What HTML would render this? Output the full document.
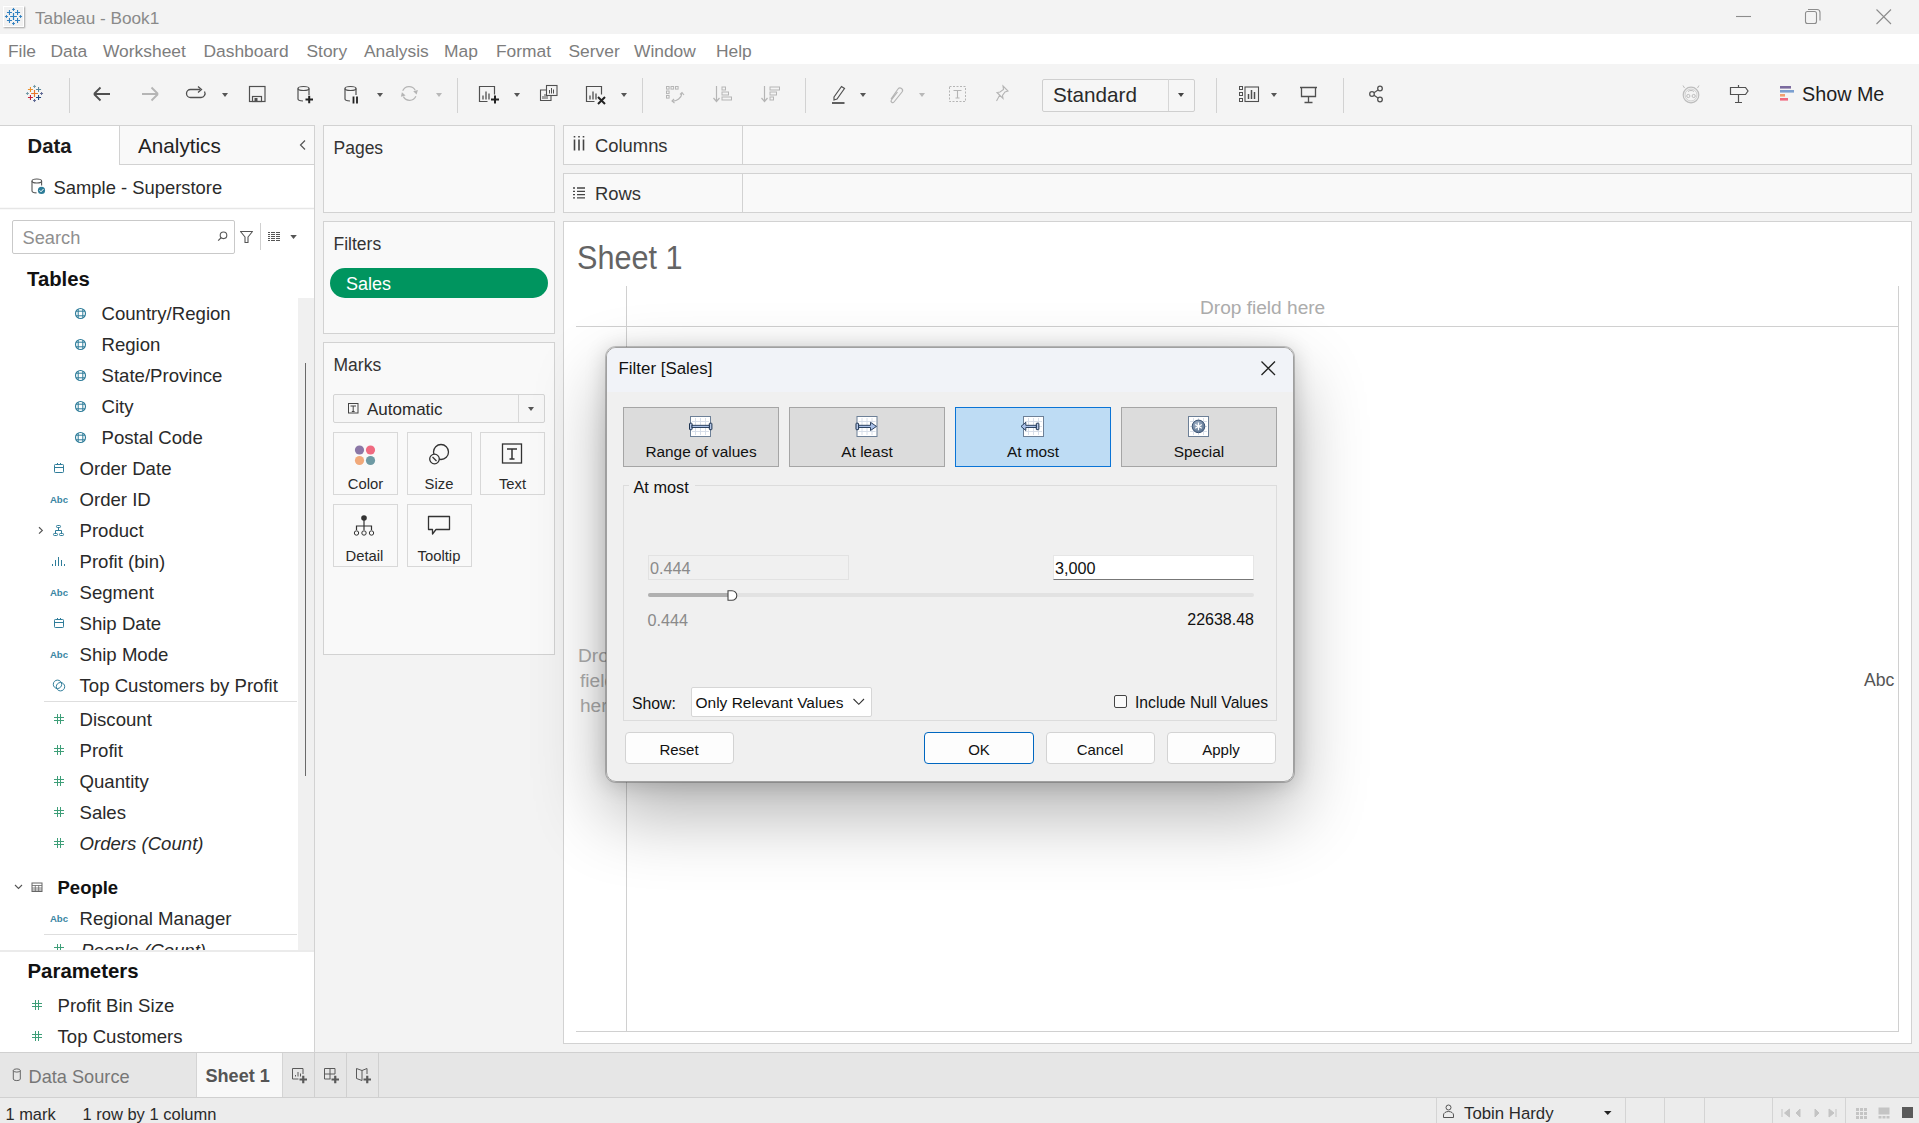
<!DOCTYPE html>
<html><head><meta charset="utf-8">
<style>
*{box-sizing:border-box;margin:0;padding:0}
html,body{width:1919px;height:1123px;overflow:hidden;background:#f3f3f3;font-family:"Liberation Sans",sans-serif;color:#333}
.a{position:absolute}
.t{position:absolute;white-space:nowrap;line-height:1}
svg{position:absolute;overflow:visible}
#title{left:0;top:0;width:1919px;height:34px;background:#f3f3f3}
#menu{left:0;top:34px;width:1919px;height:30px;background:#fff}
#menu .t{top:42px;font-size:17.4px;color:#7c7c7c}
#tool{left:0;top:64px;width:1919px;height:61px;background:#f4f4f4}
.sep{position:absolute;top:78px;width:1px;height:35px;background:#d2d2d2}
.dd{position:absolute;width:0;height:0;border-left:3.5px solid transparent;border-right:3.5px solid transparent;border-top:4px solid #555}
.dd.l{border-top-color:#b8b8b8}
#datapane{left:0;top:125px;width:315px;height:927px;background:#fff;border-right:1px solid #d2d2d2;border-top:1px solid #d2d2d2}
.shelf{position:absolute;background:#f9f9f9;border:1px solid #d2d2d2}
#canvas{left:563px;top:221px;width:1349px;height:823px;background:#fff;border:1px solid #d2d2d2}
#tabs{left:0;top:1052px;width:1919px;height:46px;background:#e6e6e6;border-top:1px solid #d0d0d0;border-bottom:1px solid #d0d0d0}
#status{left:0;top:1098px;width:1919px;height:25px;background:#ececec}
.fi{position:absolute;font-size:18.6px;color:#2a2a2a;white-space:nowrap;line-height:1}
.ic{position:absolute}
</style></head><body>
<div class="a" id="title"></div>
<div class="a" style="left:3px;top:6px;width:21px;height:21px;background:#f1f1f1;border:1px solid #fff;box-shadow:1px 1px 1.5px rgba(0,0,0,.32)"></div>
<svg style="left:0;top:0" width="60" height="120"><g transform="translate(13.5 16.5) scale(1.0)"><path d="M-3.4 0H3.4M0 -3.4V3.4" stroke="#2f7fc0" stroke-width="1.15"/><path d="M-6.55 -4.05H-1.5499999999999998M-4.05 -6.55V-1.5499999999999998" stroke="#2f7fc0" stroke-width="1.05"/><path d="M1.5499999999999998 -4.05H6.55M4.05 -6.55V-1.5499999999999998" stroke="#2f7fc0" stroke-width="1.05"/><path d="M-6.55 4.05H-1.5499999999999998M-4.05 1.5499999999999998V6.55" stroke="#2f7fc0" stroke-width="1.05"/><path d="M1.5499999999999998 4.05H6.55M4.05 1.5499999999999998V6.55" stroke="#2f7fc0" stroke-width="1.05"/><path d="M-1.5 -7.05H1.5M0 -8.55V-5.55" stroke="#2f7fc0" stroke-width="0.95"/><path d="M-1.5 7.05H1.5M0 5.55V8.55" stroke="#2f7fc0" stroke-width="0.95"/><path d="M-8.55 0H-5.55M-7.05 -1.5V1.5" stroke="#2f7fc0" stroke-width="0.95"/><path d="M5.55 0H8.55M7.05 -1.5V1.5" stroke="#2f7fc0" stroke-width="0.95"/></g></svg>
<div class="t" style="left:35px;top:9.8px;font-size:17.2px;color:#8a8a8a;font-weight:normal;">Tableau - Book1</div>
<svg style="left:0;top:0" width="1919" height="34"><g stroke="#8c8c8c" stroke-width="1.1" fill="none"><path d="M1736 16.5H1751"/><rect x="1805.5" y="11.5" width="11" height="12" rx="2"/><path d="M1808 9.5H1817a3 3 0 0 1 3 3V20.5"/><path d="M1876.5 9.5L1891 24M1891 9.5L1876.5 24"/></g></svg>
<div class="a" id="menu">
</div>
<div class="t" style="left:8px;top:42.7px;font-size:17.4px;color:#7d7d7d;font-weight:normal;">File</div>
<div class="t" style="left:50.5px;top:42.7px;font-size:17.4px;color:#7d7d7d;font-weight:normal;">Data</div>
<div class="t" style="left:103px;top:42.7px;font-size:17.4px;color:#7d7d7d;font-weight:normal;">Worksheet</div>
<div class="t" style="left:203.5px;top:42.7px;font-size:17.4px;color:#7d7d7d;font-weight:normal;">Dashboard</div>
<div class="t" style="left:306.5px;top:42.7px;font-size:17.4px;color:#7d7d7d;font-weight:normal;">Story</div>
<div class="t" style="left:364px;top:42.7px;font-size:17.4px;color:#7d7d7d;font-weight:normal;">Analysis</div>
<div class="t" style="left:444px;top:42.7px;font-size:17.4px;color:#7d7d7d;font-weight:normal;">Map</div>
<div class="t" style="left:496px;top:42.7px;font-size:17.4px;color:#7d7d7d;font-weight:normal;">Format</div>
<div class="t" style="left:568.5px;top:42.7px;font-size:17.4px;color:#7d7d7d;font-weight:normal;">Server</div>
<div class="t" style="left:634px;top:42.7px;font-size:17.4px;color:#7d7d7d;font-weight:normal;">Window</div>
<div class="t" style="left:716px;top:42.7px;font-size:17.4px;color:#7d7d7d;font-weight:normal;">Help</div>
<div class="a" id="tool"></div>
<svg style="left:0;top:0" width="60" height="120"><g transform="translate(34.5 93.5) scale(1.0)"><path d="M-3.4 0H3.4M0 -3.4V3.4" stroke="#e8762b" stroke-width="1.15"/><path d="M-6.55 -4.05H-1.5499999999999998M-4.05 -6.55V-1.5499999999999998" stroke="#eb912b" stroke-width="1.05"/><path d="M1.5499999999999998 -4.05H6.55M4.05 -6.55V-1.5499999999999998" stroke="#5b879b" stroke-width="1.05"/><path d="M-6.55 4.05H-1.5499999999999998M-4.05 1.5499999999999998V6.55" stroke="#c72035" stroke-width="1.05"/><path d="M1.5499999999999998 4.05H6.55M4.05 1.5499999999999998V6.55" stroke="#1f457e" stroke-width="1.05"/><path d="M-1.5 -7.05H1.5M0 -8.55V-5.55" stroke="#7199a6" stroke-width="0.95"/><path d="M-1.5 7.05H1.5M0 5.55V8.55" stroke="#5b6591" stroke-width="0.95"/><path d="M-8.55 0H-5.55M-7.05 -1.5V1.5" stroke="#7199a6" stroke-width="0.95"/><path d="M5.55 0H8.55M7.05 -1.5V1.5" stroke="#5b6591" stroke-width="0.95"/></g></svg>
<div class="sep" style="left:69px"></div>
<div class="sep" style="left:457px"></div>
<div class="sep" style="left:642px"></div>
<div class="sep" style="left:805px"></div>
<div class="sep" style="left:1216px"></div>
<div class="sep" style="left:1343px"></div>
<div class="dd" style="left:222px;top:92.5px"></div>
<div class="dd" style="left:377px;top:92.5px"></div>
<div class="dd" style="left:514px;top:92.5px"></div>
<div class="dd" style="left:621px;top:92.5px"></div>
<div class="dd" style="left:860px;top:92.5px"></div>
<div class="dd" style="left:1271px;top:92.5px"></div>
<div class="dd l" style="left:436px;top:92.5px"></div>
<div class="dd l" style="left:919px;top:92.5px"></div>
<svg style="left:0;top:0" width="1919" height="130"><path d="M94 94H110M94 94L100.5 87.5M94 94L100.5 100.5" stroke="#505050" stroke-width="1.8" fill="none"/><path d="M142 94H158M158 94L151.5 87.5M158 94L151.5 100.5" stroke="#b5b5b5" stroke-width="1.8" fill="none"/><path d="M200 89.5H190.5a4 4 0 0 0 0 8H201a4 4 0 0 0 3.5-6" stroke="#505050" stroke-width="1.3" fill="none"/><path d="M198 86.5L201.5 89.5L198 92.5" stroke="#505050" stroke-width="1.3" fill="none"/><rect x="249.5" y="86.5" width="15.5" height="15" stroke="#505050" stroke-width="1.2" fill="none"/><rect x="252.5" y="96.5" width="9" height="5" stroke="#505050" stroke-width="1.2" fill="none"/><rect x="254.5" y="98" width="3" height="3.5" fill="#505050"/><ellipse cx="303.5" cy="88.5" rx="5.5" ry="2" stroke="#505050" stroke-width="1.2" fill="none"/><path d="M298 88.5V99a5.5 2 0 0 0 5 2M309 88.5V95" stroke="#505050" stroke-width="1.2" fill="none"/><path d="M305.5 99.5H313M309.2 95.7V103.3" stroke="#222" stroke-width="2"/><ellipse cx="350.5" cy="88.5" rx="5.5" ry="2" stroke="#505050" stroke-width="1.2" fill="none"/><path d="M345 88.5V99a5.5 2 0 0 0 5 2M356 88.5V95" stroke="#505050" stroke-width="1.2" fill="none"/><path d="M353.5 96.5V103.5M357 96.5V103.5" stroke="#222" stroke-width="1.8"/><path d="M402.7 90.8A7 7 0 0 1 415.2 90.2M415.9 96.2A7 7 0 0 1 403.4 96.6" stroke="#b5b5b5" stroke-width="1.25" fill="none"/><path d="M413.2 91.3L417.9 89.9L416.6 94.4Z M405.6 95.5L400.9 96.7L401.9 92.3Z" fill="#b5b5b5"/><path d="M494.5 94.5V86.5H479.5V101.5H487.5" stroke="#505050" stroke-width="1.2" fill="none"/><path d="M483.0 99.5V95.5M486.0 99.5V91.5M489.0 99.5V93.5" stroke="#505050" stroke-width="1.3"/><path d="M491 99.5H499M495 95.5V103.5" stroke="#222" stroke-width="2"/><rect x="546.5" y="85.5" width="10.5" height="10" stroke="#505050" stroke-width="1.1" fill="none"/><path d="M549.5 93.5V90M551.5 93.5V88M553.5 93.5V89.5" stroke="#505050" stroke-width="1"/><path d="M546 90H540.5V100.5H551V96" stroke="#505050" stroke-width="1.1" fill="none"/><path d="M543 99V96M545 99V94M547 99V95" stroke="#505050" stroke-width="1"/><path d="M601.5 94.5V86.5H586.5V101.5H594.5" stroke="#505050" stroke-width="1.2" fill="none"/><path d="M590.0 99.5V95.5M593.0 99.5V91.5M596.0 99.5V93.5" stroke="#505050" stroke-width="1.3"/><path d="M598 97L605 104M605 97L598 104" stroke="#222" stroke-width="2"/><rect x="666.5" y="86.5" width="2.6" height="2.6" stroke="#b5b5b5" stroke-width="1" fill="none"/><rect x="671.0" y="86.5" width="2.6" height="2.6" stroke="#b5b5b5" stroke-width="1" fill="none"/><rect x="675.5" y="86.5" width="2.6" height="2.6" stroke="#b5b5b5" stroke-width="1" fill="none"/><rect x="666.5" y="91.0" width="2.6" height="2.6" stroke="#b5b5b5" stroke-width="1" fill="none"/><rect x="666.5" y="95.5" width="2.6" height="2.6" stroke="#b5b5b5" stroke-width="1" fill="none"/><path d="M672 101a9 9 0 0 0 10-8" stroke="#b5b5b5" stroke-width="1.2" fill="none"/><path d="M680 94.5L682 92.5L684 95M674 99L672 101L674.5 103" stroke="#b5b5b5" stroke-width="1.1" fill="none"/><path d="M716.5 86V101M713.5 98L716.5 101.5L719.5 98" stroke="#b5b5b5" stroke-width="1.2" fill="none"/><rect x="722" y="87" width="3.5" height="3" stroke="#b5b5b5" fill="none"/><rect x="722" y="92" width="6.5" height="3" stroke="#b5b5b5" fill="none"/><rect x="722" y="97" width="9.5" height="3" stroke="#b5b5b5" fill="none"/><path d="M764.5 86V101M761.5 98L764.5 101.5L767.5 98" stroke="#b5b5b5" stroke-width="1.2" fill="none"/><rect x="770" y="87" width="9.5" height="3" stroke="#b5b5b5" fill="none"/><rect x="770" y="92" width="6.5" height="3" stroke="#b5b5b5" fill="none"/><rect x="770" y="97" width="3.5" height="3" stroke="#b5b5b5" fill="none"/><path d="M834 97L841.5 86.5L844.5 88.5L837 99L834 100Z" stroke="#505050" stroke-width="1.2" fill="none"/><path d="M832 103H844.5" stroke="#505050" stroke-width="1.8"/><path d="M891 99L898 89a2.5 2.5 0 0 1 4 3L894 102a1.6 1.6 0 0 1-2.6-2L897.5 92" stroke="#b5b5b5" stroke-width="1.2" fill="none"/><rect x="949.5" y="86.5" width="16" height="15" stroke="#b5b5b5" stroke-width="1" stroke-dasharray="2 1.5" fill="none"/><path d="M953.5 90.5H961.5M957.5 90.5V98M955.5 98H959.5" stroke="#b5b5b5" stroke-width="1.1" fill="none"/><path d="M1003 86l5 5-3 1-2.5 3.5 0.5 3-6-6 3-0.5 3.5-2.5z M999.5 95.5L996.5 101" stroke="#b5b5b5" stroke-width="1.1" fill="none"/><rect x="1239.5" y="86.5" width="3" height="3" stroke="#505050" fill="none"/><rect x="1239.5" y="92.5" width="3" height="3" stroke="#505050" fill="none"/><rect x="1239.5" y="98.5" width="3" height="3" stroke="#505050" fill="none"/><rect x="1245" y="87" width="13.5" height="14.5" stroke="#505050" stroke-width="1.1" fill="none"/><path d="M1248.5 99V94M1251.5 99V90M1254.5 99V92" stroke="#505050" stroke-width="1.5"/><path d="M1300 87.5H1317M1301.5 87.5V96.5H1315.5V87.5M1308.5 96.5V102.5M1304.5 102.5H1312.5" stroke="#505050" stroke-width="1.3" fill="none"/><circle cx="1372" cy="94" r="2.3" stroke="#505050" stroke-width="1.3" fill="none"/><circle cx="1380" cy="88.5" r="2.3" stroke="#505050" stroke-width="1.3" fill="none"/><circle cx="1380" cy="99.5" r="2.3" stroke="#505050" stroke-width="1.3" fill="none"/><path d="M1374 92.7L1378 90M1374 95.3L1378 98" stroke="#505050" stroke-width="1.2"/><circle cx="1691" cy="95" r="7.8" stroke="#bdbdbd" stroke-width="1.2" fill="none"/><circle cx="1691" cy="95" r="6" stroke="#cfcfcf" stroke-width="1" fill="none"/><path d="M1684.5 88L1683 85.5M1697.5 88L1699 85.5" stroke="#bdbdbd" stroke-width="1"/><circle cx="1688.3" cy="96" r="1.6" stroke="#bdbdbd" stroke-width="1" fill="none"/><circle cx="1693.7" cy="96" r="1.6" stroke="#bdbdbd" stroke-width="1" fill="none"/><path d="M1688 91.5a4 3 0 0 1 6 0" stroke="#bdbdbd" stroke-width="1" fill="none"/><path d="M1738.5 85V102.5M1735 102.5H1742" stroke="#505050" stroke-width="1.2" fill="none"/><path d="M1730.5 87.5H1745.5L1748 91L1745.5 94.5H1730.5Z" stroke="#505050" stroke-width="1.2" fill="#f4f4f4"/><rect x="1780" y="86" width="11" height="2.6" fill="#7b6a9e"/><rect x="1780" y="90" width="14" height="2.6" fill="#7b9fd0"/><rect x="1780" y="94" width="5" height="2.6" fill="#f0a070"/><rect x="1780" y="98" width="8" height="2.6" fill="#f06a80"/></svg>
<div class="a" style="left:1042px;top:78.5px;width:153px;height:33px;border:1px solid #cfcfcf;border-radius:2px;background:#f6f6f6"></div>
<div class="a" style="left:1168px;top:79px;width:1px;height:32px;background:#d6d6d6"></div>
<div class="dd" style="left:1177.5px;top:92.5px;border-top-color:#444"></div>
<div class="t" style="left:1053px;top:84.7px;font-size:20.7px;color:#2a2a2a;font-weight:normal;">Standard</div>
<div class="t" style="left:1802px;top:85.1px;font-size:19.75px;color:#1e1e1e;font-weight:normal;">Show Me</div>
<div class="a" id="datapane"></div>
<div class="a" style="left:119px;top:126px;width:195px;height:39px;background:#f9f9f9;border-left:1px solid #d2d2d2;border-bottom:1px solid #d2d2d2"></div>
<div class="t" style="left:27.5px;top:136.4px;font-size:20.3px;color:#1a1a1a;font-weight:bold;">Data</div>
<div class="t" style="left:138px;top:136.2px;font-size:20.7px;color:#222;font-weight:normal;">Analytics</div>
<div class="a" style="left:12px;top:220px;width:223px;height:34px;border:1px solid #c9c9c9;border-radius:2px;background:#fff"></div>
<svg style="left:0;top:0" width="320" height="260"><path d="M305 140.5L300.5 145L305 149.5" stroke="#555" stroke-width="1.2" fill="none"/><ellipse cx="36.8" cy="181" rx="4.8" ry="2" stroke="#555" stroke-width="1.1" fill="none"/><path d="M32 181V191a4.8 2 0 0 0 4.5 1.9M41.6 181V185.5" stroke="#555" stroke-width="1.1" fill="none"/><circle cx="41.5" cy="190.4" r="3.6" fill="#2d7c98"/><path d="M39.6 190.3L41 191.8L43.5 189" stroke="#fff" stroke-width="1" fill="none"/><path d="M0 208.5H314" stroke="#e6e6e6" stroke-width="1.5"/><circle cx="223.5" cy="235.3" r="3.3" stroke="#555" stroke-width="1.1" fill="none"/><path d="M221.2 237.6L218.2 240.6" stroke="#555" stroke-width="1.2"/><path d="M240.5 231.5H252.5L248 237V242.5H245V237Z" stroke="#555" stroke-width="1.1" fill="none" stroke-linejoin="round"/><path d="M260.5 223V250" stroke="#d0d0d0" stroke-width="1"/><path d="M268 232.5H270M271 232.5H275M276 232.5H280" stroke="#555" stroke-width="1"/><path d="M268 234.5H270M271 234.5H275M276 234.5H280" stroke="#555" stroke-width="1"/><path d="M268 236.5H270M271 236.5H275M276 236.5H280" stroke="#555" stroke-width="1"/><path d="M268 238.5H270M271 238.5H275M276 238.5H280" stroke="#555" stroke-width="1"/><path d="M268 240.5H270M271 240.5H275M276 240.5H280" stroke="#555" stroke-width="1"/><path d="M290.3 235H296.8L293.5 239Z" fill="#555"/></svg>
<div class="t" style="left:22.5px;top:228.8px;font-size:18.3px;color:#8f8f8f;font-weight:normal;">Search</div>
<div class="t" style="left:27px;top:269.4px;font-size:20.3px;color:#111;font-weight:bold;">Tables</div>
<div class="a" style="left:298px;top:298px;width:16px;height:652px;background:#f0f0f0"></div>
<div class="a" style="left:305px;top:363px;width:1px;height:413px;background:#6a6a6a"></div>
<div class="t" style="left:101.5px;top:305.1px;font-size:18.6px;color:#2a2a2a;font-weight:normal;">Country/Region</div>
<div class="t" style="left:101.5px;top:336.1px;font-size:18.6px;color:#2a2a2a;font-weight:normal;">Region</div>
<div class="t" style="left:101.5px;top:367.1px;font-size:18.6px;color:#2a2a2a;font-weight:normal;">State/Province</div>
<div class="t" style="left:101.5px;top:398.1px;font-size:18.6px;color:#2a2a2a;font-weight:normal;">City</div>
<div class="t" style="left:101.5px;top:429.1px;font-size:18.6px;color:#2a2a2a;font-weight:normal;">Postal Code</div>
<div class="t" style="left:79.5px;top:460.1px;font-size:18.6px;color:#2a2a2a;font-weight:normal;">Order Date</div>
<div class="t" style="left:79.5px;top:491.1px;font-size:18.6px;color:#2a2a2a;font-weight:normal;">Order ID</div>
<div class="t" style="left:79.5px;top:522.1px;font-size:18.6px;color:#2a2a2a;font-weight:normal;">Product</div>
<div class="t" style="left:79.5px;top:553.1px;font-size:18.6px;color:#2a2a2a;font-weight:normal;">Profit (bin)</div>
<div class="t" style="left:79.5px;top:584.1px;font-size:18.6px;color:#2a2a2a;font-weight:normal;">Segment</div>
<div class="t" style="left:79.5px;top:615.1px;font-size:18.6px;color:#2a2a2a;font-weight:normal;">Ship Date</div>
<div class="t" style="left:79.5px;top:646.1px;font-size:18.6px;color:#2a2a2a;font-weight:normal;">Ship Mode</div>
<div class="t" style="left:79.5px;top:677.1px;font-size:18.6px;color:#2a2a2a;font-weight:normal;">Top Customers by Profit</div>
<div class="t" style="left:79.5px;top:711.1px;font-size:18.6px;color:#2a2a2a;font-weight:normal;">Discount</div>
<div class="t" style="left:79.5px;top:742.1px;font-size:18.6px;color:#2a2a2a;font-weight:normal;">Profit</div>
<div class="t" style="left:79.5px;top:773.1px;font-size:18.6px;color:#2a2a2a;font-weight:normal;">Quantity</div>
<div class="t" style="left:79.5px;top:804.1px;font-size:18.6px;color:#2a2a2a;font-weight:normal;">Sales</div>
<div class="t" style="left:79.5px;top:835.1px;font-size:18.6px;color:#2a2a2a;font-weight:normal;font-style:italic;">Orders (Count)</div>
<div class="t" style="left:79.5px;top:910.1px;font-size:18.6px;color:#2a2a2a;font-weight:normal;">Regional Manager</div>
<div class="t" style="left:57.5px;top:878.7px;font-size:18.5px;color:#111;font-weight:bold;">People</div>
<div class="a" style="left:0;top:936px;width:297px;height:14px;overflow:hidden"><div class="t" style="left:81px;top:6px;font-size:18.6px;color:#2a2a2a;font-style:italic">People (Count)</div><svg style="left:0;top:0" width="80" height="20"><path d="M57.5 8V18M60.5 8V18M54 11.5H64M54 14.5H64" stroke="#3e9e78" stroke-width="1"/></svg></div>
<div class="a" style="left:0;top:951.5px;width:314px;height:100px;background:#fff"></div>
<div class="t" style="left:27.5px;top:960.8px;font-size:20.4px;color:#111;font-weight:bold;">Parameters</div>
<div class="t" style="left:57.5px;top:997.1px;font-size:18.6px;color:#2a2a2a;font-weight:normal;">Profit Bin Size</div>
<div class="t" style="left:57.5px;top:1028.1px;font-size:18.6px;color:#2a2a2a;font-weight:normal;">Top Customers</div>
<svg style="left:0;top:0" width="320" height="1060"><circle cx="80.5" cy="313.5" r="5.0" stroke="#2f7d9a" stroke-width="1.15" fill="none"/><path d="M78.2 309.06040542391537V317.93959457608463M82.8 309.06040542391537V317.93959457608463M76.06040542391537 311.2H84.93959457608463M76.06040542391537 315.8H84.93959457608463" stroke="#2f7d9a" stroke-width="1"/><circle cx="80.5" cy="344.5" r="5.0" stroke="#2f7d9a" stroke-width="1.15" fill="none"/><path d="M78.2 340.06040542391537V348.93959457608463M82.8 340.06040542391537V348.93959457608463M76.06040542391537 342.2H84.93959457608463M76.06040542391537 346.8H84.93959457608463" stroke="#2f7d9a" stroke-width="1"/><circle cx="80.5" cy="375.5" r="5.0" stroke="#2f7d9a" stroke-width="1.15" fill="none"/><path d="M78.2 371.06040542391537V379.93959457608463M82.8 371.06040542391537V379.93959457608463M76.06040542391537 373.2H84.93959457608463M76.06040542391537 377.8H84.93959457608463" stroke="#2f7d9a" stroke-width="1"/><circle cx="80.5" cy="406.5" r="5.0" stroke="#2f7d9a" stroke-width="1.15" fill="none"/><path d="M78.2 402.06040542391537V410.93959457608463M82.8 402.06040542391537V410.93959457608463M76.06040542391537 404.2H84.93959457608463M76.06040542391537 408.8H84.93959457608463" stroke="#2f7d9a" stroke-width="1"/><circle cx="80.5" cy="437.5" r="5.0" stroke="#2f7d9a" stroke-width="1.15" fill="none"/><path d="M78.2 433.06040542391537V441.93959457608463M82.8 433.06040542391537V441.93959457608463M76.06040542391537 435.2H84.93959457608463M76.06040542391537 439.8H84.93959457608463" stroke="#2f7d9a" stroke-width="1"/><rect x="54.5" y="464.5" width="9" height="8" rx="0.8" stroke="#2f7d9a" stroke-width="1" fill="none"/><path d="M54.5 467.5H63.5M57.5 463.0V465.0M60.5 463.0V465.0" stroke="#2f7d9a" stroke-width="1"/><text x="59" y="503.1" text-anchor="middle" font-family="Liberation Sans" font-weight="bold" font-size="9.6" fill="#3a86a3">Abc</text><rect x="56.5" y="525.5" width="4" height="2" rx="0.8" stroke="#2f7d9a" stroke-width="1" fill="none"/><rect x="53.5" y="533.5" width="4" height="2" rx="0.8" stroke="#2f7d9a" stroke-width="1" fill="none"/><rect x="59.5" y="533.5" width="4" height="2" rx="0.8" stroke="#2f7d9a" stroke-width="1" fill="none"/><path d="M58.5 528.0V530.5M55.5 533.0V530.5H61.5V533.0" stroke="#2f7d9a" stroke-width="1" fill="none"/><path d="M52.5 566.0V564.0" stroke="#2f7d9a" stroke-width="1"/><path d="M55.5 566.0V560.0" stroke="#2f7d9a" stroke-width="1"/><path d="M58.5 566.0V557.0" stroke="#2f7d9a" stroke-width="1"/><path d="M61.5 566.0V560.0" stroke="#2f7d9a" stroke-width="1"/><path d="M64.5 566.0V564.0" stroke="#2f7d9a" stroke-width="1"/><text x="59" y="596.1" text-anchor="middle" font-family="Liberation Sans" font-weight="bold" font-size="9.6" fill="#3a86a3">Abc</text><rect x="54.5" y="619.5" width="9" height="8" rx="0.8" stroke="#2f7d9a" stroke-width="1" fill="none"/><path d="M54.5 622.5H63.5M57.5 618.0V620.0M60.5 618.0V620.0" stroke="#2f7d9a" stroke-width="1"/><text x="59" y="658.1" text-anchor="middle" font-family="Liberation Sans" font-weight="bold" font-size="9.6" fill="#3a86a3">Abc</text><circle cx="57.5" cy="684.3" r="4.2" stroke="#2f7d9a" stroke-width="1" fill="none"/><circle cx="60.5" cy="686.7" r="4.2" stroke="#2f7d9a" stroke-width="1" fill="none"/><path d="M57.5 714V724M60.5 714V724M54 717.5H64M54 720.5H64" stroke="#3e9e78" stroke-width="1"/><path d="M57.5 745V755M60.5 745V755M54 748.5H64M54 751.5H64" stroke="#3e9e78" stroke-width="1"/><path d="M57.5 776V786M60.5 776V786M54 779.5H64M54 782.5H64" stroke="#3e9e78" stroke-width="1"/><path d="M57.5 807V817M60.5 807V817M54 810.5H64M54 813.5H64" stroke="#3e9e78" stroke-width="1"/><path d="M57.5 838V848M60.5 838V848M54 841.5H64M54 844.5H64" stroke="#3e9e78" stroke-width="1"/><text x="59" y="922.1" text-anchor="middle" font-family="Liberation Sans" font-weight="bold" font-size="9.6" fill="#3a86a3">Abc</text><path d="M39 527.2L42.3 530.4L39 533.6" stroke="#555" stroke-width="1.2" fill="none"/><path d="M44 701.5H297" stroke="#dedede" stroke-width="1"/><path d="M44 934.5H297" stroke="#dedede" stroke-width="1"/><path d="M15 885L18.5 888.5L22 885" stroke="#555" stroke-width="1.1" fill="none"/><rect x="32" y="883" width="10" height="8.5" stroke="#666" stroke-width="1" fill="none"/><path d="M32 885.5H42M32 888H42M32 890H42M35.3 885.5V891.5M38.7 885.5V891.5" stroke="#666" stroke-width="0.8"/><path d="M0 951H314" stroke="#d8d8d8" stroke-width="1.2"/><path d="M35.5 1000V1010M38.5 1000V1010M32 1003.5H42M32 1006.5H42" stroke="#3e9e78" stroke-width="1"/><path d="M35.5 1031V1041M38.5 1031V1041M32 1034.5H42M32 1037.5H42" stroke="#3e9e78" stroke-width="1"/></svg>
<div class="t" style="left:53.5px;top:178.7px;font-size:18.4px;color:#2a2a2a;font-weight:normal;">Sample - Superstore</div>
<div class="shelf" style="left:323px;top:125px;width:232px;height:88px"></div>
<div class="t" style="left:333.5px;top:139.6px;font-size:17.5px;color:#333;font-weight:normal;">Pages</div>
<div class="shelf" style="left:323px;top:221px;width:232px;height:113px"></div>
<div class="t" style="left:333.5px;top:236.1px;font-size:17.5px;color:#333;font-weight:normal;">Filters</div>
<div class="a" style="left:330px;top:268px;width:218px;height:30px;border-radius:15px;background:#00955f"></div>
<div class="t" style="left:346px;top:275.4px;font-size:18px;color:#fff;font-weight:normal;">Sales</div>
<div class="shelf" style="left:323px;top:342px;width:232px;height:313px"></div>
<div class="t" style="left:333.5px;top:357.1px;font-size:17.5px;color:#333;font-weight:normal;">Marks</div>
<div class="a" style="left:333px;top:394px;width:212px;height:29px;border:1px solid #d4d4d4;border-radius:2px;background:#f6f6f6"></div>
<div class="a" style="left:518px;top:395px;width:1px;height:27px;background:#d8d8d8"></div>
<div class="dd" style="left:528px;top:406.5px;border-top-color:#555"></div>
<div class="t" style="left:367px;top:400.9px;font-size:17px;color:#2a2a2a;font-weight:normal;">Automatic</div>
<div class="a" style="left:333px;top:432px;width:65px;height:63px;border:1px solid #d8d8d8;background:#f9f9f9"></div>
<div class="a" style="left:407px;top:432px;width:65px;height:63px;border:1px solid #d8d8d8;background:#f9f9f9"></div>
<div class="a" style="left:480px;top:432px;width:65px;height:63px;border:1px solid #d8d8d8;background:#f9f9f9"></div>
<div class="a" style="left:333px;top:504px;width:65px;height:63px;border:1px solid #d8d8d8;background:#f9f9f9"></div>
<div class="a" style="left:407px;top:504px;width:65px;height:63px;border:1px solid #d8d8d8;background:#f9f9f9"></div>
<div class="t" style="left:305.5px;width:120px;text-align:center;top:477.3px;font-size:14.8px;color:#2a2a2a">Color</div>
<div class="t" style="left:379px;width:120px;text-align:center;top:477.3px;font-size:14.8px;color:#2a2a2a">Size</div>
<div class="t" style="left:452.5px;width:120px;text-align:center;top:477.3px;font-size:14.8px;color:#2a2a2a">Text</div>
<div class="t" style="left:304.5px;width:120px;text-align:center;top:549.3px;font-size:14.8px;color:#2a2a2a">Detail</div>
<div class="t" style="left:379px;width:120px;text-align:center;top:549.3px;font-size:14.8px;color:#2a2a2a">Tooltip</div>
<svg style="left:0;top:0" width="600" height="600"><circle cx="359.5" cy="450" r="4.6" fill="#8b77a6"/><circle cx="370.5" cy="450" r="4.6" fill="#f06a80"/><circle cx="359.5" cy="460.5" r="4.6" fill="#f1a97a"/><circle cx="370.5" cy="460.5" r="4.6" fill="#6e9aa4"/><circle cx="441" cy="452" r="7.5" stroke="#333" stroke-width="1.3" fill="#f9f9f9"/><circle cx="434.5" cy="459" r="4.8" stroke="#333" stroke-width="1.3" fill="#f9f9f9"/><path d="M432.5 457L436.5 461" stroke="#333" stroke-width="1.2"/><rect x="502.5" y="444" width="19" height="19" stroke="#333" stroke-width="1.3" fill="none"/><path d="M507 449H517M512 449V459M509.5 459H514.5" stroke="#333" stroke-width="1.5" fill="none"/><rect x="348.5" y="403.5" width="9.5" height="9.5" stroke="#444" stroke-width="1" fill="none"/><path d="M350.5 406H356M353.2 406V411.5M351.8 411.5H354.6" stroke="#444" stroke-width="1" fill="none"/><circle cx="364" cy="518" r="2.8" fill="#333"/><path d="M364 520V526M356.5 530V526H371.5V530M364 526V530" stroke="#333" stroke-width="1.2" fill="none"/><circle cx="356.5" cy="533" r="2.2" stroke="#333" stroke-width="1" fill="none"/><circle cx="364" cy="533" r="2.2" stroke="#333" stroke-width="1" fill="none"/><circle cx="371.5" cy="533" r="2.2" stroke="#333" stroke-width="1" fill="none"/><path d="M428.5 516.5H449.5V529.5H436L432.5 534V529.5H428.5Z" stroke="#333" stroke-width="1.3" fill="none" stroke-linejoin="round"/></svg>
<div class="shelf" style="left:563px;top:125px;width:1349px;height:40px"></div>
<div class="a" style="left:742px;top:126px;width:1px;height:38px;background:#d2d2d2"></div>
<div class="shelf" style="left:563px;top:173px;width:1349px;height:40px"></div>
<div class="a" style="left:742px;top:174px;width:1px;height:38px;background:#d2d2d2"></div>
<div class="t" style="left:595px;top:137.2px;font-size:18.4px;color:#333;font-weight:normal;">Columns</div>
<div class="t" style="left:595px;top:185.2px;font-size:18.4px;color:#333;font-weight:normal;">Rows</div>
<svg style="left:0;top:0" width="800" height="220"><path d="M574.5 139.5V150.5M579 139.5V150.5M583.5 139.5V150.5" stroke="#444" stroke-width="1.6"/><path d="M574.5 136V137.6M579 136V137.6M583.5 136V137.6" stroke="#444" stroke-width="1.6"/><path d="M573 188.0H575M577 188.0H585" stroke="#444" stroke-width="1.3"/><path d="M573 191.3H575M577 191.3H585" stroke="#444" stroke-width="1.3"/><path d="M573 194.6H575M577 194.6H585" stroke="#444" stroke-width="1.3"/><path d="M573 197.9H575M577 197.9H585" stroke="#444" stroke-width="1.3"/></svg>
<div class="a" id="canvas"></div>
<div class="t" style="left:577px;top:242.5px;font-size:30.6px;color:#646464;transform:scaleY(1.08);transform-origin:0 25px">Sheet 1</div>
<div class="a" style="left:626px;top:286px;width:1px;height:746px;background:#d0d0d0"></div>
<div class="a" style="left:1898px;top:286px;width:1px;height:746px;background:#d0d0d0"></div>
<div class="a" style="left:576px;top:326px;width:1323px;height:1px;background:#d0d0d0"></div>
<div class="a" style="left:576px;top:1031px;width:1323px;height:1px;background:#d0d0d0"></div>
<div class="t" style="left:1200px;top:298.4px;font-size:19.1px;color:#acacac;font-weight:normal;">Drop field here</div>
<div class="t" style="left:578px;top:646.4px;font-size:19.1px;color:#acacac;font-weight:normal;">Drop</div>
<div class="t" style="left:580px;top:671.4px;font-size:19.1px;color:#acacac;font-weight:normal;">field</div>
<div class="t" style="left:580px;top:696.4px;font-size:19.1px;color:#acacac;font-weight:normal;">here</div>
<div class="t" style="left:1864px;top:672.1px;font-size:17.6px;color:#555;font-weight:normal;">Abc</div>
<div class="a" id="tabs"></div>
<div class="a" style="left:195.5px;top:1053px;width:87px;height:44px;background:#f8f8f8;border-left:1px solid #d4d4d4;border-right:1px solid #d4d4d4"></div>
<div class="a" style="left:314px;top:1053px;width:1px;height:44px;background:#d0d0d0"></div>
<div class="a" style="left:346px;top:1053px;width:1px;height:44px;background:#d0d0d0"></div>
<div class="a" style="left:378px;top:1053px;width:1px;height:44px;background:#d0d0d0"></div>
<div class="t" style="left:28.5px;top:1067.8px;font-size:18.2px;color:#777;font-weight:normal;">Data Source</div>
<div class="t" style="left:205.5px;top:1067.4px;font-size:18.1px;color:#555;font-weight:bold;">Sheet 1</div>
<svg style="left:0;top:0" width="400" height="1123"><ellipse cx="16.8" cy="1070.5" rx="3.5" ry="1.6" stroke="#666" stroke-width="1" fill="none"/><path d="M13.3 1070.5V1079a3.5 1.6 0 0 0 7 0V1070.5" stroke="#666" stroke-width="1" fill="none"/><path d="M303.0 1074.0V1068.5H292.5V1079.0H298.5" stroke="#5a5a5a" stroke-width="1" fill="none"/><path d="M295.5 1076.5V1075.0M298.0 1076.5V1072.0M300.5 1076.5V1073.5" stroke="#5a5a5a" stroke-width="1"/><path d="M299.5 1079.5H307.0M303.25 1075.7V1083.3" stroke="#5a5a5a" stroke-width="2.2"/><path d="M335.0 1074.0V1068.5H324.5V1079.0H330.5M324.5 1074.0H335.0M330.0 1068.5V1079.0" stroke="#5a5a5a" stroke-width="1" fill="none"/><path d="M331.5 1079.5H339.0M335.25 1075.7V1083.3" stroke="#5a5a5a" stroke-width="2.2"/><path d="M367.0 1074.0V1068.5L362.0 1070.5L356.5 1068.5V1078.5L362.0 1080.5V1070.5" stroke="#5a5a5a" stroke-width="1" fill="none"/><path d="M363.5 1079.5H371.0M367.25 1075.7V1083.3" stroke="#5a5a5a" stroke-width="2.2"/></svg>
<div class="a" id="status"></div>
<div class="t" style="left:5.5px;top:1106.1px;font-size:16.4px;color:#2a2a2a;font-weight:normal;">1 mark</div>
<div class="t" style="left:82.5px;top:1106.1px;font-size:16.5px;color:#2a2a2a;font-weight:normal;">1 row by 1 column</div>
<div class="a" style="left:1436px;top:1098px;width:1px;height:25px;background:#d4d4d4"></div>
<div class="a" style="left:1625px;top:1098px;width:1px;height:25px;background:#d4d4d4"></div>
<div class="a" style="left:1664px;top:1098px;width:1px;height:25px;background:#d4d4d4"></div>
<div class="a" style="left:1703.5px;top:1098px;width:1px;height:25px;background:#d4d4d4"></div>
<div class="a" style="left:1772px;top:1098px;width:1px;height:25px;background:#d4d4d4"></div>
<div class="a" style="left:1845px;top:1098px;width:1px;height:25px;background:#d4d4d4"></div>
<div class="t" style="left:1464px;top:1105.9px;font-size:16.8px;color:#2a2a2a;font-weight:normal;">Tobin Hardy</div>
<svg style="left:0;top:0" width="1919" height="1123"><circle cx="1448.5" cy="1107.5" r="2.5" stroke="#555" stroke-width="1" fill="none"/><path d="M1443.5 1117.5V1115a5 3.5 0 0 1 10 0V1117.5Z" stroke="#555" stroke-width="1" fill="none"/><path d="M1604 1111H1611.5L1607.75 1115Z" fill="#222"/><path d="M1782 1109V1117M1789.5 1109L1784.5 1113L1789.5 1117Z M1800 1109L1796 1113L1800 1117Z M1815 1109L1819 1113L1815 1117Z M1829 1109L1834 1113L1829 1117Z M1836 1109V1117" stroke="#c4c4c4" stroke-width="1" fill="#c4c4c4"/><rect x="1856" y="1108" width="3" height="3" fill="#c4c4c4"/><rect x="1856" y="1112" width="3" height="3" fill="#c4c4c4"/><rect x="1856" y="1116" width="3" height="3" fill="#c4c4c4"/><rect x="1860" y="1108" width="3" height="3" fill="#c4c4c4"/><rect x="1860" y="1112" width="3" height="3" fill="#c4c4c4"/><rect x="1860" y="1116" width="3" height="3" fill="#c4c4c4"/><rect x="1864" y="1108" width="3" height="3" fill="#c4c4c4"/><rect x="1864" y="1112" width="3" height="3" fill="#c4c4c4"/><rect x="1864" y="1116" width="3" height="3" fill="#c4c4c4"/><rect x="1878.5" y="1107.5" width="11" height="7" fill="#c4c4c4"/><rect x="1878.5" y="1116" width="3" height="2.5" fill="#c4c4c4"/><rect x="1882.5" y="1116" width="3" height="2.5" fill="#c4c4c4"/><rect x="1886.5" y="1116" width="3" height="2.5" fill="#c4c4c4"/><rect x="1902" y="1107" width="11" height="11" fill="#5a5a5a"/></svg>
<div class="a" style="left:606px;top:347px;width:688px;height:434.5px;border-radius:10px;box-shadow:0 32px 72px rgba(0,0,0,.30),0 2px 21px rgba(0,0,0,.18),0 0 0 1px rgba(0,0,0,.2)"></div>
<div class="a" style="left:606px;top:347px;width:688px;height:434.5px;border-radius:10px;border:1px solid #a0a0a0;background:#f0f0f0;overflow:hidden"><div class="a" style="left:0;top:0;width:688px;height:43.5px;background:#f1f3f8"></div></div>
<div class="t" style="left:618.5px;top:361.4px;font-size:16.9px;color:#111;font-weight:normal;">Filter [Sales]</div>
<div class="a" style="left:623px;top:407px;width:156px;height:60px;background:#dcdcdc;border:1px solid #a5a5a5"></div>
<div class="t" style="left:623px;width:156px;text-align:center;top:443.5px;font-size:15.4px;color:#111">Range of values</div>
<div class="a" style="left:789px;top:407px;width:156px;height:60px;background:#dcdcdc;border:1px solid #a5a5a5"></div>
<div class="t" style="left:789px;width:156px;text-align:center;top:443.5px;font-size:15.4px;color:#111">At least</div>
<div class="a" style="left:955px;top:407px;width:156px;height:60px;background:#bedcf4;border:1px solid #0a74d6"></div>
<div class="t" style="left:955px;width:156px;text-align:center;top:443.5px;font-size:15.4px;color:#111">At most</div>
<div class="a" style="left:1121px;top:407px;width:156px;height:60px;background:#dcdcdc;border:1px solid #a5a5a5"></div>
<div class="t" style="left:1121px;width:156px;text-align:center;top:443.5px;font-size:15.4px;color:#111">Special</div>
<div class="a" style="left:623px;top:485px;width:654px;height:236px;border:1px solid #dcdcdc"></div>
<div class="a" style="left:629px;top:478px;width:66px;height:14px;background:#f0f0f0"></div>
<div class="t" style="left:633.5px;top:479.2px;font-size:16.3px;color:#111;font-weight:normal;">At most</div>
<div class="a" style="left:648px;top:555px;width:201px;height:25px;border:1px solid #e2e2e2;background:#f0f0f0"></div>
<div class="t" style="left:650px;top:559.7px;font-size:16.2px;color:#8a8a8a;font-weight:normal;">0.444</div>
<div class="a" style="left:1052.5px;top:555px;width:201px;height:25px;border:1px solid #e6e6e6;border-bottom:1px solid #777;background:#fff"></div>
<div class="t" style="left:1055px;top:559.7px;font-size:16.2px;color:#111;font-weight:normal;">3,000</div>
<div class="a" style="left:648px;top:593px;width:606px;height:3.5px;background:#e2e2e2;border-radius:2px"></div>
<div class="a" style="left:648px;top:593px;width:84px;height:3.5px;background:#b0b0b0;border-radius:2px"></div>
<div class="t" style="left:647.5px;top:611.7px;font-size:16.2px;color:#8a8a8a;font-weight:normal;">0.444</div>
<div class="t" style="left:1100px;width:154px;text-align:right;top:611.8px;font-size:16px;color:#111">22638.48</div>
<div class="t" style="left:632px;top:695.9px;font-size:15.8px;color:#111;font-weight:normal;">Show:</div>
<div class="a" style="left:691px;top:686.5px;width:181px;height:30px;border:1px solid #d6d6d6;border-radius:2px;background:#fff"></div>
<div class="t" style="left:695.5px;top:695.0px;font-size:15.5px;color:#111;font-weight:normal;">Only Relevant Values</div>
<div class="a" style="left:1114px;top:695px;width:13px;height:13px;border:1px solid #444;border-radius:2px;background:#fafafa"></div>
<div class="t" style="left:1135px;top:695.4px;font-size:15.7px;color:#111;font-weight:normal;">Include Null Values</div>
<div class="a" style="left:624.5px;top:732px;width:109px;height:32px;border:1px solid #d3d3d3;border-radius:4px;background:#fdfdfd"></div>
<div class="t" style="left:624.5px;width:109px;text-align:center;top:742.2px;font-size:15px;color:#111">Reset</div>
<div class="a" style="left:924px;top:732px;width:110px;height:32px;border:1px solid #0067c0;border-radius:4px;background:#fdfdfd"></div>
<div class="t" style="left:924px;width:110px;text-align:center;top:742.2px;font-size:15px;color:#111">OK</div>
<div class="a" style="left:1045.5px;top:732px;width:109px;height:32px;border:1px solid #d3d3d3;border-radius:4px;background:#fdfdfd"></div>
<div class="t" style="left:1045.5px;width:109px;text-align:center;top:742.2px;font-size:15px;color:#111">Cancel</div>
<div class="a" style="left:1166.5px;top:732px;width:109px;height:32px;border:1px solid #d3d3d3;border-radius:4px;background:#fdfdfd"></div>
<div class="t" style="left:1166.5px;width:109px;text-align:center;top:742.2px;font-size:15px;color:#111">Apply</div>
<svg style="left:0;top:0" width="1919" height="1123"><path d="M1261.5 361.5L1275 375M1275 361.5L1261.5 375" stroke="#222" stroke-width="1.3"/><rect x="690.5" y="416.5" width="20" height="20" fill="#fff" stroke="#6d8097" stroke-width="1"/><path d="M695.5 418V435M692 421.5H709" stroke="#d4dbe8" stroke-width="0.9"/><path d="M700.5 418V435M692 426.5H709" stroke="#d4dbe8" stroke-width="0.9"/><path d="M705.5 418V435M692 431.5H709" stroke="#d4dbe8" stroke-width="0.9"/><rect x="689.5" y="423.2" width="2.6" height="6.5" rx="0.6" fill="#b7c8e8" stroke="#1d3350" stroke-width="1"/><rect x="709.3" y="423.2" width="2.6" height="6.5" rx="0.6" fill="#b7c8e8" stroke="#1d3350" stroke-width="1"/><rect x="692" y="425.3" width="17.3" height="2.2" fill="#a9c0e8" stroke="#1d3350" stroke-width="0.9"/><rect x="857.0" y="416.5" width="20" height="20" fill="#fff" stroke="#6d8097" stroke-width="1"/><path d="M862.0 418V435M858.5 421.5H875.5" stroke="#d4dbe8" stroke-width="0.9"/><path d="M867.0 418V435M858.5 426.5H875.5" stroke="#d4dbe8" stroke-width="0.9"/><path d="M872.0 418V435M858.5 431.5H875.5" stroke="#d4dbe8" stroke-width="0.9"/><rect x="856" y="423.2" width="2.6" height="6.5" rx="0.6" fill="#b7c8e8" stroke="#1d3350" stroke-width="1"/><path d="M858.6 425.3H870.5V422.3L876.5 426.4L870.5 430.5V427.5H858.6Z" fill="#a9c0e8" stroke="#1d3350" stroke-width="0.9" stroke-linejoin="round"/><rect x="1023.5" y="416.5" width="20" height="20" fill="#fff" stroke="#6d8097" stroke-width="1"/><path d="M1028.5 418V435M1025 421.5H1042" stroke="#d4dbe8" stroke-width="0.9"/><path d="M1033.5 418V435M1025 426.5H1042" stroke="#d4dbe8" stroke-width="0.9"/><path d="M1038.5 418V435M1025 431.5H1042" stroke="#d4dbe8" stroke-width="0.9"/><rect x="1036.3" y="423.2" width="2.6" height="6.5" rx="0.6" fill="#b7c8e8" stroke="#1d3350" stroke-width="1"/><path d="M1036.3 425.3H1025.8V422.3L1021 426.4L1025.8 430.5V427.5H1036.3Z" fill="#a9c0e8" stroke="#1d3350" stroke-width="0.9" stroke-linejoin="round"/><rect x="1188.5" y="416.5" width="20" height="20" fill="#fff" stroke="#6d8097" stroke-width="1"/><path d="M1193.5 418V435M1190 421.5H1207" stroke="#d4dbe8" stroke-width="0.9"/><path d="M1198.5 418V435M1190 426.5H1207" stroke="#d4dbe8" stroke-width="0.9"/><path d="M1203.5 418V435M1190 431.5H1207" stroke="#d4dbe8" stroke-width="0.9"/><defs><radialGradient id="sg" cx="40%" cy="35%" r="70%"><stop offset="0" stop-color="#a4b4c8"/><stop offset="1" stop-color="#566f8e"/></radialGradient></defs><circle cx="1198.5" cy="426.4" r="6.3" fill="url(#sg)" stroke="#3a5373" stroke-width="1"/><path d="M1198.5 422.6V430.2M1195.2 424.5L1201.8 428.3M1195.2 428.3L1201.8 424.5" stroke="#fff" stroke-width="1.1"/><path d="M728 590.7H732a4.8 4.8 0 0 1 0 9.6H728Z" fill="#fff" stroke="#444" stroke-width="1.1"/><path d="M853.5 699L858.8 704.3L864 699" stroke="#333" stroke-width="1.1" fill="none"/></svg>
</body></html>
